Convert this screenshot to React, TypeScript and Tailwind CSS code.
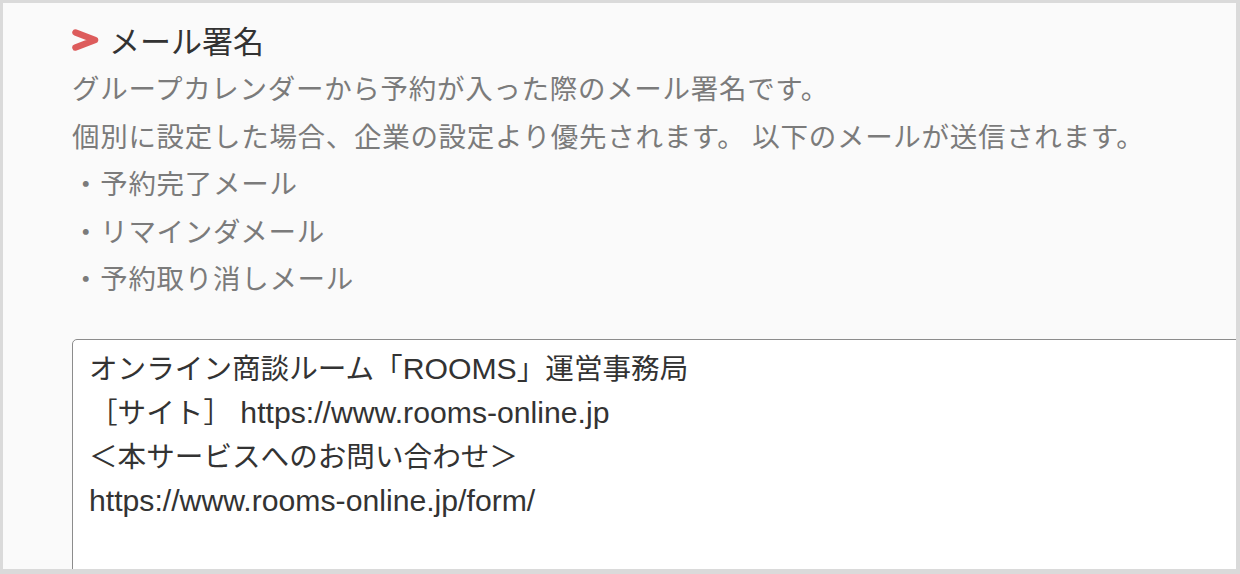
import React from "react";

const jp = { fontFamily: '"Noto Sans CJK JP", "Noto Sans", sans-serif' };
const mixed = { fontFamily: '"Liberation Sans", "Noto Sans CJK JP", sans-serif' };

function L({ children }: { children: React.ReactNode }) {
  return <span className="text-[30.2px]">{children}</span>;
}

export default function App() {
  const lines = [
    "グループカレンダーから予約が入った際のメール署名です。",
    "個別に設定した場合、企業の設定より優先されます。 以下のメールが送信されます。",
    "・予約完了メール",
    "・リマインダメール",
    "・予約取り消しメール",
  ];
  return (
    <div className="w-[1240px] h-[574px] overflow-hidden border-t-[3px] border-l-[3px] border-r-[4px] border-b-[5px] border-[#dadada] bg-[#fafafa]">
      <div className="pl-[69px] pt-[17px]" style={jp}>
        <div className="flex items-center h-[40px]">
          <svg width="27" height="22" viewBox="0 0 27 22" className="mr-[10px]">
            <path d="M3.5 3.5 L23 11 L3.5 18.5" fill="none" stroke="#dd5c5c" strokeWidth="6.5" strokeLinecap="round" strokeLinejoin="round" />
          </svg>
          <span className="text-[31px] leading-[40px] text-[#333333]">メール署名</span>
        </div>
        <div className="mt-[4px] text-[27.5px] leading-[47.5px] tracking-[0.7px] text-[#7b7b7b] whitespace-pre">
          {lines.map((l, i) => (
            <div key={i}>{l}</div>
          ))}
        </div>
        <div
          className="mt-[37px] w-[1200px] h-[300px] bg-white border border-[#8c8c8c] rounded-tl-[5px] pl-[16px] pt-[7px] text-[28.6px] leading-[44px] text-[#333333] whitespace-pre"
          style={mixed}
        >
          <div>
            オンライン商談ルーム「<L>ROOMS</L>」運営事務局
          </div>
          <div>
            ［サイト］<L> https://www.rooms-online.jp</L>
          </div>
          <div>＜本サービスへのお問い合わせ＞</div>
          <div>
            <L>https://www.rooms-online.jp/form/</L>
          </div>
        </div>
      </div>
    </div>
  );
}
